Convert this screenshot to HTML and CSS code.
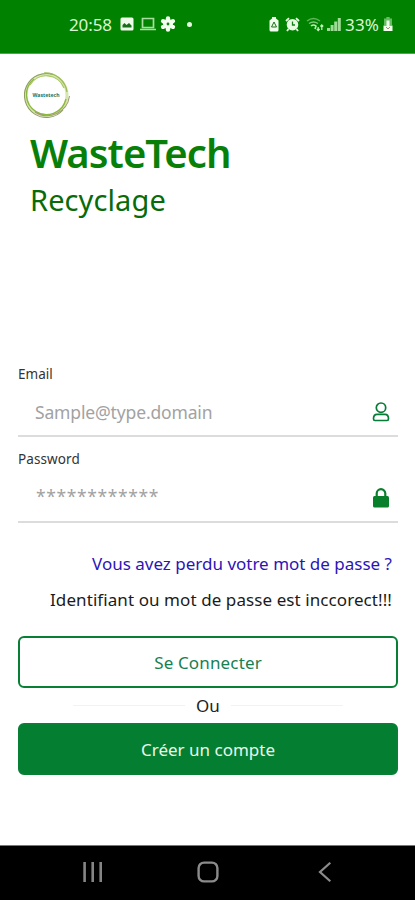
FILE: index.html
```html
<!DOCTYPE html>
<html lang="fr">
<head>
<meta charset="utf-8">
<title>WasteTech</title>
<link rel="stylesheet" href="styles.css">
</head>
<body>
<div class="screen">
  <header class="status">
    <div class="status-left">
      <span class="clock">20:58</span>
      <svg class="picture" width="14" height="14" viewBox="0 0 14 14"><rect x=".5" y=".5" width="13" height="13" rx="1.5" fill="#effbe9"/><path d="M2.500 10.500V8l2-2 2 2 2.500-2 2.500 2.500v2z" fill="#176f17"/></svg>
      <svg class="laptop" width="16" height="14" viewBox="0 0 16 14" fill="none" stroke="#a9dda0" stroke-width="1.700"><path d="M2.500 1.500h11v9h-11zM0 12.500h16"/></svg>
      <svg class="flower" width="16" height="16" viewBox="0 0 16 16"><circle cx="8" cy="8" r="5" fill="#f4fff0"/><g stroke="#f4fff0" stroke-width="4.400" stroke-linecap="round"><path d="M8 2.400v11.200M3.100 5.200l9.800 5.600M12.900 5.200l-9.800 5.600"/></g><circle cx="8" cy="8" r="1.400" fill="#168016"/></svg>
      <span class="dot"></span>
    </div>
    <div class="status-right">
      <svg class="saver" width="10" height="15" viewBox="0 0 10 15"><path d="M3 0h4v1.500l2.500 2V13q0 1.500-1.500 1.500H2Q.5 14.500.5 13V3.500L3 1.500z" fill="#f0ffeb"/><path d="M5 5l2.500 5h-5z" fill="none" stroke="#176f17"/></svg>
      <svg class="alarm" width="15" height="15" viewBox="0 0 15 15"><path d="M1 4l3-2.800M14 4l-3-2.800M3.500 12l-1.500 2M11.500 12l1.500 2" stroke="#e7fbe2" stroke-width="1.800"/><circle cx="7.500" cy="7.700" r="5.800" fill="#e7fbe2"/><path d="M7.500 4.500V8H10" fill="none" stroke="#168016" stroke-width="1.300"/></svg>
      <svg class="wifi" width="18" height="15" viewBox="0 0 18 15" fill="none"><path d="M1 4q6.500-5 13 0" stroke="#5fb75a" stroke-width="1.300"/><path d="M3 6.500q4.500-3 9 0" stroke="#7fca79" stroke-width="1.400"/><path d="M5 9q2.500-2 5 0l-1 3" stroke="#baf0b3" stroke-width="1.600"/><path d="M12.200 14V10M10.800 12l1.400 1.500 1.400-1.500M15.800 13V8M14.400 9.500l1.400-1.500 1.400 1.500" stroke="#c5f3bf" stroke-width="1.200"/></svg>
      <svg class="signal" width="14" height="14" viewBox="0 0 14 14" fill="#9edc97"><path d="M0 11h3v3H0zM3.600 8h3v6h-3zM7.200 4.500h3V14h-3zM10.800 1h3v13h-3z"/></svg>
      <span class="charge">33%</span>
      <svg class="battery" width="10" height="15" viewBox="0 0 10 15"><path d="M3.300 0h3.400v1.500H9V8H1V1.500h2.300z" fill="#65bc61"/><path d="M3.500 3.500h3v5H9.500V14H.5V8.500h3z" fill="#f0ffeb"/><path d="M3 10l2 2 2-2" fill="none" stroke="#a08a82"/></svg>
    </div>
  </header>

  <main class="content">
    <svg class="logo" width="50" height="50" viewBox="0 0 50 50" fill="none">
      <circle cx="24.500" cy="25" r="20.500" stroke="#d5e7aa" stroke-width="3"/>
      <path d="M31 4.500A22 22 0 1 0 41 40" stroke="#8d9d62" stroke-width="1.100"/>
      <path d="M22 3A22 22 0 0 1 45 22" stroke="#9abb55" stroke-width="1.200"/>
      <path d="M12 9A20 20 0 1 0 44 29" stroke="#8cb83f" stroke-width="1.300"/>
      <path d="M13 42A22.500 22.500 0 0 0 47.500 26" stroke="#a49b76" stroke-width="1.100"/>
      <path d="M8 15A19 19 0 0 1 42 18" stroke="#a7c666" stroke-width="1.100"/>
      <text class="logo-name" x="10.500" y="27" textLength="27" lengthAdjust="spacingAndGlyphs">Wastetech</text>
    </svg>
    <h1 class="title">WasteTech</h1>
    <p class="subtitle">Recyclage</p>

    <form class="form">
      <label class="label email-label">Email</label>
      <div class="field">
        <span class="placeholder">Sample@type.domain</span>
        <svg width="18" height="20" viewBox="0 0 18 20" fill="none" stroke="#087b36" stroke-width="1.700"><circle cx="9" cy="5.700" r="4.700"/><path d="M5 12.300h8q3.500 0 3.500 4.500 0 1.700-1.500 1.700H3q-1.500 0-1.500-1.700 0-4.500 3.500-4.500z"/></svg>
      </div>
      <label class="label password-label">Password</label>
      <div class="field password-field">
        <span class="placeholder stars">************</span>
        <svg width="18" height="20" viewBox="0 0 18 20"><path d="M4.700 9V5.500a4.300 4.300 0 0 1 8.600 0V9" fill="none" stroke="#087f2b" stroke-width="2.200"/><rect x="1" y="8" width="16" height="11.500" rx="1.500" fill="#087f2b"/></svg>
      </div>
      <a class="message lost">Vous avez perdu votre mot de passe ?</a>
      <p class="message error">Identifiant ou mot de passe est inccorect!!!</p>
      <button type="button" class="button connect">Se Connecter</button>
      <div class="separator"><span class="rule"></span><span class="or">Ou</span><span class="rule"></span></div>
      <button type="button" class="button create">Créer un compte</button>
    </form>
  </main>

  <nav class="nav">
    <svg width="20" height="20" viewBox="0 0 20 20" stroke="#858585" stroke-width="2.600"><path d="M1.600 0v20M9.700 0v20M17.700 0v20"/></svg>
    <svg class="home" width="22" height="22" viewBox="0 0 22 22" fill="none" stroke="#8b8b8b" stroke-width="2.400"><rect x="1.600" y="1.600" width="18.800" height="18.800" rx="5.500"/></svg>
    <svg class="back" width="14" height="20" viewBox="0 0 14 20" fill="none" stroke="#8b8b8b" stroke-width="2.200"><path d="M12.300.8L2 10l10.300 9.200"/></svg>
  </nav>
</div>
</body>
</html>
```
FILE: styles.css
```css
* { box-sizing: border-box; }
body { margin: 0; background: #fff; font-family: "Noto Sans", sans-serif; color: #222; }
svg { display: block; flex: none; }
h1, p { margin: 0; }
.screen { height: 900px; display: flex; flex-direction: column; overflow: hidden; }

.status { height: 54px; background: #008200; border-bottom: 1px solid #4da64d; display: flex; justify-content: space-between; padding: 9px 22px 14px 69px; color: #d9f6d3; font-size: 17px; }
.status-left, .status-right { display: flex; align-items: center; }
.clock { width: 44px; letter-spacing: -0.1px; white-space: nowrap; }
.picture { margin-left: 7px; }
.laptop { margin-left: 6px; }
.flower { margin-left: 4px; }
.dot { width: 5px; height: 5px; border-radius: 50%; background: #e5fbe1; margin-left: 11px; }
.alarm { margin-left: 7px; }
.wifi { margin-left: 6px; }
.signal { margin-left: 3px; }
.charge { width: 38px; margin-left: 4px; letter-spacing: 0.2px; white-space: nowrap; }
.saver { margin-right: -1px; }

.content { flex: 1; padding: 16px 17px 0 18px; }
.logo { margin-left: 4px; }
.logo-name { font-size: 5.5px; font-weight: 700; fill: #177567; }
.title { margin: 7px 0 0 12px; font-size: 40px; line-height: 52px; font-weight: 600; letter-spacing: -0.95px; color: #088008; white-space: nowrap; }
.subtitle { margin: 1px 0 0 12px; font-size: 29px; line-height: 40px; letter-spacing: 0.1px; color: #086b08; white-space: nowrap; }

.form { margin-top: 144px; display: flex; flex-direction: column; }
.label { font-size: 13.5px; line-height: 20px; color: #333; }
.field { height: 53px; border-bottom: 2px solid #dcdcdc; display: flex; align-items: center; justify-content: space-between; padding: 5px 8px 0 17px; }
.password-label { margin-top: 12px; letter-spacing: 0.1px; }
.password-field { height: 54px; }
.placeholder { font-size: 17.5px; letter-spacing: -0.15px; color: #a2a2a2; white-space: nowrap; }
.stars { letter-spacing: 0.6px; padding: 0 0 4px 1px; }
.message { align-self: flex-end; margin-right: 6px; font-size: 17px; line-height: 24px; white-space: nowrap; }
.lost { margin-top: 29px; color: #2b16b5; }
.error { margin-top: 12px; letter-spacing: 0.08px; color: #1b1b1b; }
.button { height: 52px; border: 2px solid #087f35; border-radius: 6px; padding: 0; font: 17px "Noto Sans", sans-serif; }
.connect { margin-top: 24px; letter-spacing: 0.15px; background: #fff; color: #168052; }
.separator { height: 35px; display: flex; align-items: center; justify-content: center; gap: 11px; font-size: 17px; }
.rule { width: 112px; height: 1px; background: #f2f2f2; }
.create { background: #047f31; color: #e8f8ea; }

.nav { height: 55px; background: #000; border-top: 1px solid #777; display: flex; align-items: center; padding: 0 0 2px 83px; }
.home { margin-left: 94px; }
.back { margin-left: 99px; }
```
